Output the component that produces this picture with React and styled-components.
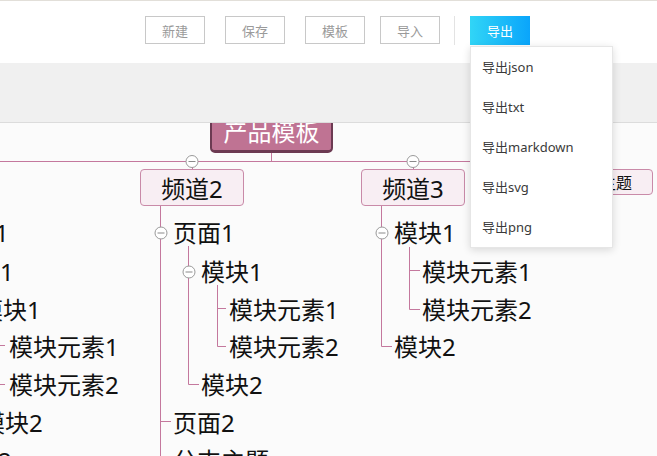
import React from "react";
import styled, { createGlobalStyle } from "styled-components";

const CANVAS_TOP = 123;
const FONT = `"Noto Sans", "Noto Sans CJK SC", sans-serif`;

const Global = createGlobalStyle`
  html, body { margin: 0; padding: 0; background: #fbfbfb; }
  body { font-family: ${FONT}; }
  * { box-sizing: border-box; }
`;

const Page = styled.div`
  position: relative;
  width: 657px;
  height: 456px;
  overflow: hidden;
  display: flex;
  flex-direction: column;
`;

const Toolbar = styled.div`
  height: 63px;
  flex: none;
  background: #fff;
  border-top: 1px solid #e2dfd9;
  padding: 15px 0 0 145px;
  display: flex;
  align-items: flex-start;
`;

const ToolButton = styled.button`
  width: 60px;
  height: 28px;
  margin-left: ${(p) => p.$gap || 0}px;
  border: 1px solid #c8c8c8;
  background: #fff;
  color: #9a9a9a;
  font-family: ${FONT};
  font-size: 13px;
  padding: 0;
  cursor: pointer;
`;

const Divider = styled.div`
  width: 1px;
  height: 29px;
  margin-left: 14px;
  background: #e3e3e3;
`;

const PrimaryButton = styled.button`
  width: 60px;
  height: 29px;
  margin-left: 15px;
  border: none;
  background: linear-gradient(90deg, #31d5f6 0%, #0aa5fb 100%);
  color: #fff;
  font-family: ${FONT};
  font-size: 13px;
  padding: 0;
`;

const Band = styled.div`
  height: 60px;
  flex: none;
  background: #f0f0f0;
  border-bottom: 1px solid #dcdcdc;
`;

const Canvas = styled.div`
  position: relative;
  flex: 1;
  background: #fbfbfb;
  overflow: hidden;
`;

const Lines = styled.svg`
  position: absolute;
  left: 0;
  top: 0;
  width: 100%;
  height: 100%;
  overflow: visible;
`;

const RootNode = styled.div`
  position: absolute;
  left: 210px;
  top: ${112 - CANVAS_TOP}px;
  width: 123px;
  height: 41px;
  background: #bf7393;
  border: 2px solid #6c3a52;
  border-bottom-width: 3px;
  border-radius: 5px;
  color: #fff;
  font-size: 24px;
  line-height: 36px;
  text-align: center;
  white-space: nowrap;
`;

const BranchBox = styled.div`
  position: absolute;
  left: ${(p) => p.$x}px;
  top: ${(p) => p.$y - CANVAS_TOP}px;
  width: ${(p) => p.$w}px;
  height: ${(p) => p.$h}px;
  background: #f8eef3;
  border: 1px solid #c98aa8;
  border-radius: 4px;
  display: flex;
  align-items: center;
  justify-content: center;
  color: #111;
  font-size: ${(p) => (p.$small ? 16 : 24)}px;
  white-space: nowrap;
`;

const Topic = styled.div`
  position: absolute;
  left: ${(p) => p.$x}px;
  top: ${(p) => p.$cy - 15 - CANVAS_TOP}px;
  height: 30px;
  line-height: 30px;
  font-size: 24px;
  color: #111;
  white-space: nowrap;
`;

const Menu = styled.div`
  position: absolute;
  left: 470px;
  top: 46px;
  width: 143px;
  background: #fff;
  border: 1px solid #e6e6e6;
  box-shadow: 0 2px 8px rgba(0, 0, 0, 0.14);
  display: flex;
  flex-direction: column;
  z-index: 5;
`;

const MenuItem = styled.div`
  height: 40px;
  line-height: 40px;
  padding-left: 11px;
  font-size: 13px;
  color: #3a3a3a;
  white-space: nowrap;
`;

const branches = [
  { x: 140, y: 169, w: 104, h: 37, text: "频道2" },
  { x: 361, y: 169, w: 104, h: 37, text: "频道3" },
  { x: 547, y: 169, w: 106, h: 26, text: "分支主题", small: true },
];

const topics = [
  // partial column (频道1)
  { x: -53, cy: 233, text: "主题1" },
  { x: -48, cy: 272, text: "页面1" },
  { x: -21, cy: 310, text: "模块1" },
  { x: 9, cy: 347, text: "模块元素1" },
  { x: 9, cy: 385, text: "模块元素2" },
  { x: -19, cy: 423, text: "模块2" },
  { x: -50, cy: 461, text: "页面2" },
  // 频道2
  { x: 173, cy: 233, text: "页面1" },
  { x: 201, cy: 272, text: "模块1" },
  { x: 229, cy: 310, text: "模块元素1" },
  { x: 229, cy: 347, text: "模块元素2" },
  { x: 201, cy: 385, text: "模块2" },
  { x: 173, cy: 423, text: "页面2" },
  { x: 173, cy: 461, text: "分支主题" },
  // 频道3
  { x: 394, cy: 233, text: "模块1" },
  { x: 422, cy: 272, text: "模块元素1" },
  { x: 422, cy: 310, text: "模块元素2" },
  { x: 394, cy: 347, text: "模块2" },
];

const circles = [
  [192, 161.5],
  [413, 161.5],
  [161, 233],
  [189, 272],
  [382, 233],
];

const paths = [
  "M271.5 153 V161.5",
  "M0 161.5 H612",
  "M192.5 161 V169",
  "M413.5 161 V169",
  "M160.5 206 V470",
  "M188.5 246 V384.5 H199",
  "M217.5 285 V346.5 H226",
  "M217.5 308.5 H226",
  "M160.5 421.5 H171",
  "M160.5 459.5 H171",
  "M381.5 205 V346.5 H392",
  "M409.5 247 V309.5 H420",
  "M409.5 270.5 H420",
  "M-3 345.5 H5",
  "M-3 384.5 H5",
];

const menu = ["导出json", "导出txt", "导出markdown", "导出svg", "导出png"];

export default function App() {
  return (
    <Page>
      <Global />
      <Toolbar>
        <ToolButton>新建</ToolButton>
        <ToolButton $gap={20}>保存</ToolButton>
        <ToolButton $gap={20}>模板</ToolButton>
        <ToolButton $gap={15}>导入</ToolButton>
        <Divider />
        <PrimaryButton>导出</PrimaryButton>
      </Toolbar>
      <Band />
      <Canvas>
        <Lines>
          <g transform={`translate(0,-${CANVAS_TOP})`}>
            {paths.map((d, i) => (
              <path key={i} d={d} fill="none" stroke="#c4789d" strokeWidth="1" />
            ))}
            {circles.map(([cx, cy], i) => (
              <g key={i}>
                <circle cx={cx} cy={cy} r="6" fill="#fff" stroke="#9a9a9a" strokeWidth="1" />
                <path d={`M${cx - 3.5} ${cy} H${cx + 3.5}`} stroke="#8a8a8a" strokeWidth="1" />
              </g>
            ))}
          </g>
        </Lines>
        <RootNode>产品模板</RootNode>
        {branches.map((b) => (
          <BranchBox key={b.text + b.x} $x={b.x} $y={b.y} $w={b.w} $h={b.h} $small={b.small}>
            {b.text}
          </BranchBox>
        ))}
        {topics.map((t, i) => (
          <Topic key={i} $x={t.x} $cy={t.cy}>
            {t.text}
          </Topic>
        ))}
      </Canvas>
      <Menu>
        {menu.map((m) => (
          <MenuItem key={m}>{m}</MenuItem>
        ))}
      </Menu>
    </Page>
  );
}
